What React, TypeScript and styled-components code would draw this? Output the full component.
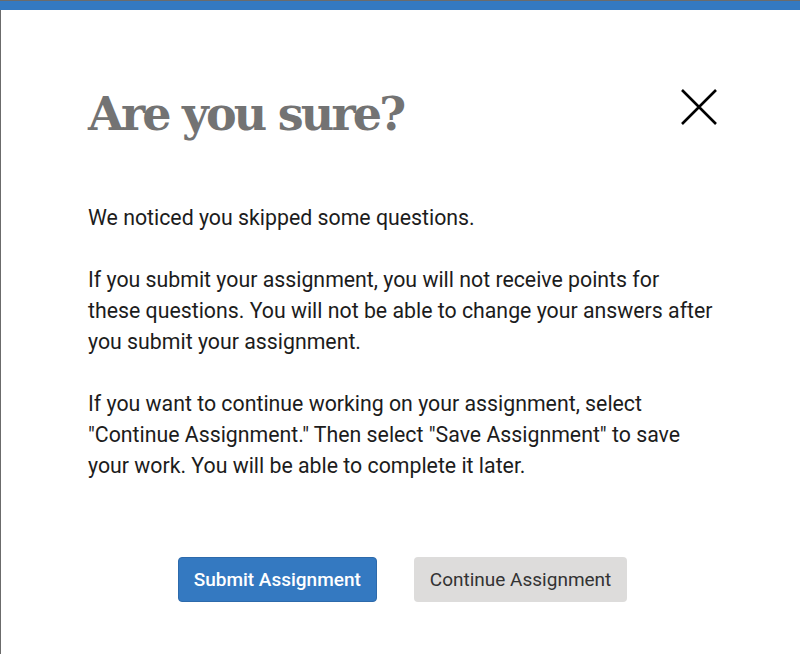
import styled, { createGlobalStyle } from "styled-components";

const GlobalStyle = createGlobalStyle`
  html, body {
    margin: 0;
    padding: 0;
    background: #ffffff;
  }

  body {
    font-family: Roboto, "Liberation Sans", sans-serif;
  }
`;

const StyledDialog = styled.div`
  border-top: 1px solid #6b6b6b;
  box-sizing: border-box;
  display: flex;
  flex-direction: column;
  height: 654px;
  width: 800px;
`;

const StyledAccent = styled.div`
  background-color: #3479c1;
  flex: 0 0 9px;
`;

const StyledBody = styled.div`
  border-left: 1px solid #6b6b6b;
  flex: 1;
  padding: 74px 83px 0 87px;
`;

const StyledHeader = styled.div`
  align-items: center;
  display: flex;
  justify-content: space-between;
  margin-bottom: 58px;
`;

const StyledTitle = styled.h1`
  color: #737373;
  font-family: "Roboto Slab", "DejaVu Serif", serif;
  font-size: 46px;
  font-weight: 700;
  letter-spacing: -2.8px;
  line-height: 60px;
  margin: 0;
`;

const StyledClose = styled.button`
  background: none;
  border: 0;
  cursor: pointer;
  height: 36px;
  margin-top: -14px;
  padding: 0;
  width: 36px;

  svg {
    display: block;
  }
`;

const StyledParagraph = styled.p`
  color: #1c1c1c;
  font-size: 21.3px;
  line-height: 31px;
  margin: 0 0 31px;
  max-width: 627px;
`;

const StyledActions = styled.div`
  display: flex;
  gap: 37px;
  justify-content: center;
  margin-top: 76px;
`;

const StyledButton = styled.button<{ $primary?: boolean }>`
  background-color: ${({ $primary }) => ($primary ? "#3479c1" : "#dddcdb")};
  border: ${({ $primary }) => ($primary ? "1px solid #2d6aab" : "0")};
  border-radius: 4px;
  box-sizing: border-box;
  color: ${({ $primary }) => ($primary ? "#ffffff" : "#333333")};
  cursor: pointer;
  font-family: Roboto, "Liberation Sans", sans-serif;
  font-size: 19px;
  font-weight: ${({ $primary }) => ($primary ? 500 : 400)};
  height: 45px;
  padding: 0 ${({ $primary }) => ($primary ? "15px" : "16px")};
`;

export default function App() {
  return (
    <>
      <GlobalStyle />
      <StyledDialog role="dialog" aria-labelledby="confirm-title">
        <StyledAccent />
        <StyledBody>
          <StyledHeader>
            <StyledTitle id="confirm-title">Are you sure?</StyledTitle>
            <StyledClose aria-label="Close">
              <svg width="36" height="36" viewBox="0 0 36 36">
                <path
                  d="M1 1 L35 35 M35 1 L1 35"
                  stroke="#000"
                  strokeWidth="2.6"
                  fill="none"
                />
              </svg>
            </StyledClose>
          </StyledHeader>
          <StyledParagraph>We noticed you skipped some questions.</StyledParagraph>
          <StyledParagraph>
            If you submit your assignment, you will not receive points for
            these questions. You will not be able to change your answers after
            you submit your assignment.
          </StyledParagraph>
          <StyledParagraph>
            If you want to continue working on your assignment, select
            "Continue Assignment." Then select "Save Assignment" to save your
            work. You will be able to complete it later.
          </StyledParagraph>
          <StyledActions>
            <StyledButton $primary>Submit Assignment</StyledButton>
            <StyledButton>Continue Assignment</StyledButton>
          </StyledActions>
        </StyledBody>
      </StyledDialog>
    </>
  );
}
